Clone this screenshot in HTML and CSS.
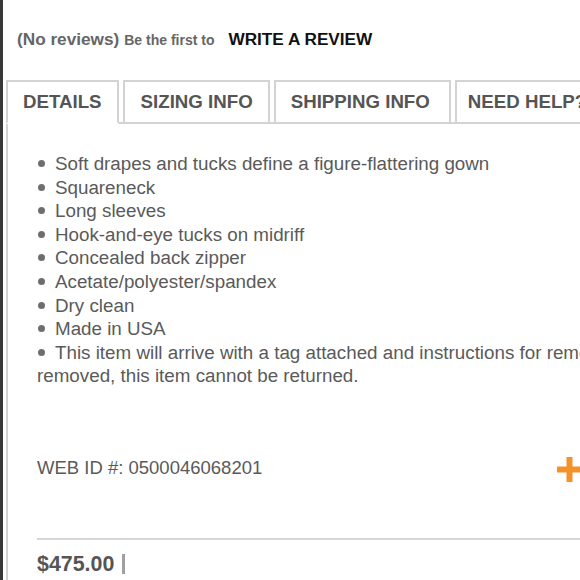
FILE: index.html
```html
<!DOCTYPE html>
<html>
<head>
<meta charset="utf-8">
<link rel="stylesheet" href="styles.css">
</head>
<body>
<div class="page">
  <div class="reviews">
    <span class="none">(No reviews)</span>
    <span class="first">Be the first to</span>
    <span class="write">WRITE A REVIEW</span>
  </div>
  <div class="tabs">
    <div class="tab active">DETAILS</div>
    <div class="tab">SIZING INFO</div>
    <div class="tab">SHIPPING INFO</div>
    <div class="tab">NEED HELP?</div>
  </div>
  <div class="panel">
    <div class="list">
      <div class="item"><span class="dot"></span>Soft drapes and tucks define a figure-flattering gown</div>
      <div class="item"><span class="dot"></span>Squareneck</div>
      <div class="item"><span class="dot"></span>Long sleeves</div>
      <div class="item"><span class="dot"></span>Hook-and-eye tucks on midriff</div>
      <div class="item"><span class="dot"></span>Concealed back zipper</div>
      <div class="item"><span class="dot"></span>Acetate/polyester/spandex</div>
      <div class="item"><span class="dot"></span>Dry clean</div>
      <div class="item"><span class="dot"></span>Made in USA</div>
      <div class="item wrap"><span class="dot"></span>This item will arrive with a tag attached and instructions for removal. If the tag is removed, this item cannot be returned.</div>
    </div>
    <div class="webid">
      <span>WEB ID #: 0500046068201</span>
      <svg class="plus" width="25" height="25" viewBox="0 0 25 25"><rect x="9.5" y="0" width="6" height="25" fill="#f3922a"/><rect x="0" y="9.5" width="25" height="6" fill="#f3922a"/></svg>
    </div>
    <div class="rule"></div>
    <div class="price"><span>$475.00</span><span class="bar"></span></div>
  </div>
</div>
</body>
</html>
```
FILE: styles.css
```css
html, body {
  margin: 0;
  padding: 0;
  background: #fff;
  overflow: hidden;
}
.page {
  width: 577px;
  height: 580px;
  border-left: 3px solid #383838;
  overflow: hidden;
  font-family: "Liberation Sans", Arial, sans-serif;
}
.reviews {
  display: flex;
  align-items: baseline;
  padding: 29px 0 0 14px;
  height: 80px;
  box-sizing: border-box;
  white-space: nowrap;
}
.none {
  font-weight: bold;
  font-size: 17.2px;
  color: #666;
}
.first {
  font-weight: bold;
  font-size: 14px;
  color: #666;
  margin-left: 5px;
}
.write {
  font-weight: bold;
  font-size: 17.2px;
  color: #111;
  margin-left: 14px;
}
.tabs {
  display: flex;
  gap: 4px;
  margin: 0 0 0 3px;
  white-space: nowrap;
  position: relative;
  z-index: 1;
}
.tab {
  height: 40px;
  border: 2px solid #d3d3d3;
  padding: 0 15px;
  font-weight: bold;
  font-size: 18.7px;
  color: #555;
  line-height: 40px;
  flex: none;
}
.tab.active {
  border-bottom: 2px solid #fff;
  padding: 0 15px 0 15px;
}
.tab:nth-child(2) { padding: 0 15px 0 16px; }
.tab:nth-child(3) { padding: 0 19px 0 15px; }
.tab:nth-child(4) { padding: 0 20px 0 11px; }
.panel {
  margin: -2px 0 0 3px;
  border-left: 2px solid #d3d3d3;
  border-top: 2px solid #d3d3d3;
  padding: 28px 0 0 29px;
  width: 760px;
  height: 600px;
}
.list {
  width: 740px;
  font-size: 18.8px;
  line-height: 23.6px;
  color: #5a5a5a;
}
.dot {
  display: inline-block;
  width: 7px;
  height: 7px;
  border-radius: 50%;
  background: #6e6e6e;
  margin: 0 10px 0 1px;
  vertical-align: 3px;
}
.webid {
  display: flex;
  align-items: center;
  justify-content: space-between;
  width: 545px;
  margin-top: 67px;
  font-size: 18.5px;
  color: #5a5a5a;
  line-height: 24px;
}
.plus {
  flex: none;
  margin-top: 2px;
}
.rule {
  margin-top: 56px;
  height: 2px;
  background: #d6d6d6;
  width: 720px;
}
.price {
  display: flex;
  align-items: center;
  margin-top: 12px;
  font-weight: bold;
  font-size: 21.4px;
  color: #555;
}
.bar {
  display: inline-block;
  width: 3px;
  height: 20px;
  background: #a0a0a0;
  margin-left: 8px;
}
```
